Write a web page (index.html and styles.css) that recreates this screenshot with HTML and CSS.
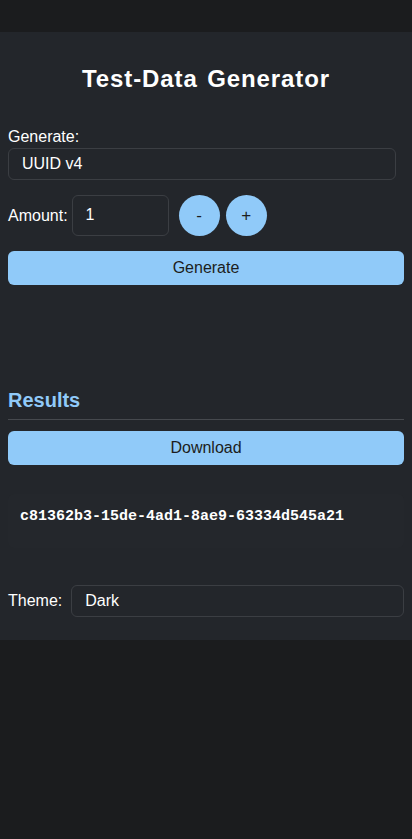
FILE: index.html
```html
<!DOCTYPE html>
<html lang="en">
<head>
<meta charset="utf-8">
<title>Test-Data Generator</title>
<link rel="stylesheet" href="styles.css">
</head>
<body>
<main class="app">
  <h1 class="title">Test-Data Generator</h1>

  <div class="field">
    <label class="label" for="kind">Generate:</label>
    <div class="select">UUID v4</div>
  </div>

  <div class="amount-row">
    <label class="label amount-label" for="amount">Amount:</label>
    <div class="number-input">1</div>
    <div class="steppers">
      <button class="circle">-</button>
      <button class="circle">+</button>
    </div>
  </div>

  <button class="btn generate">Generate</button>

  <h2 class="results-title">Results</h2>
  <hr class="divider">
  <button class="btn download">Download</button>

  <div class="result-box">
    <pre class="uuid">c81362b3-15de-4ad1-8ae9-63334d545a21</pre>
  </div>

  <div class="theme-row">
    <label class="label">Theme:</label>
    <div class="select theme-select">Dark</div>
  </div>
</main>
</body>
</html>
```

FILE: styles.css
```css
* { box-sizing: border-box; }

html, body {
  margin: 0;
  padding: 0;
  background: #1b1c1e;
  font-family: "Liberation Sans", Arial, Helvetica, sans-serif;
  color: #ffffff;
}

.app {
  margin-top: 32px;
  height: 608px;
  background: #23262b;
  padding: 8px 8px 0 8px;
  display: flex;
  flex-direction: column;
}

.title {
  margin: 25px 0 0 0;
  font-size: 24px;
  line-height: 28px;
  font-weight: 700;
  letter-spacing: 0.9px;
  word-spacing: 2px;
  text-align: center;
}

.field {
  margin-top: 35px;
  display: flex;
  flex-direction: column;
  gap: 2px;
}

.label {
  font-size: 16px;
  line-height: 18px;
  color: #ffffff;
}

.select {
  height: 32px;
  border: 1px solid #3b3e43;
  border-radius: 6px;
  padding: 0 13px;
  display: flex;
  align-items: center;
  font-size: 16px;
  color: #ffffff;
  margin-right: 8px;
}

.amount-row {
  margin-top: 15px;
  display: flex;
  align-items: center;
  height: 41px;
}

.amount-label {
  margin-right: 4px;
}

.number-input {
  width: 97px;
  height: 41px;
  border: 1px solid #3b3e43;
  border-radius: 6px;
  padding: 0 13px 2px;
  display: flex;
  align-items: center;
  font-size: 16px;
}

.steppers {
  margin-left: 10px;
  display: flex;
  gap: 6px;
}

.circle {
  width: 41px;
  height: 41px;
  border-radius: 50%;
  border: none;
  background: #90caf9;
  color: #1c1d20;
  font-family: "Liberation Sans", Arial, sans-serif;
  font-size: 17px;
  padding: 0;
}

.btn {
  height: 34px;
  border: none;
  border-radius: 6px;
  background: #90caf9;
  color: #1c1d20;
  font-family: "Liberation Sans", Arial, sans-serif;
  font-size: 16px;
  width: 100%;
}

.generate {
  margin-top: 15px;
}

.results-title {
  margin: 103px 0 0 0;
  font-size: 20px;
  line-height: 24px;
  font-weight: 700;
  color: #90caf9;
}

.divider {
  margin: 7px 0 0 0;
  border: none;
  border-top: 1px solid #46494e;
  height: 0;
}

.download {
  margin-top: 11px;
}

.result-box {
  margin-top: 29px;
  background: #24272c;
  border-radius: 6px;
  padding: 14px 12px 22px;
}

.uuid {
  margin: 0;
  font-family: "Liberation Mono", "Courier New", monospace;
  font-size: 15px;
  line-height: 18px;
  font-weight: 700;
  color: #ffffff;
}

.theme-row {
  margin-top: 37px;
  display: flex;
  align-items: center;
  gap: 9px;
}

.theme-select {
  flex: 1;
  margin-right: 0;
}
```
